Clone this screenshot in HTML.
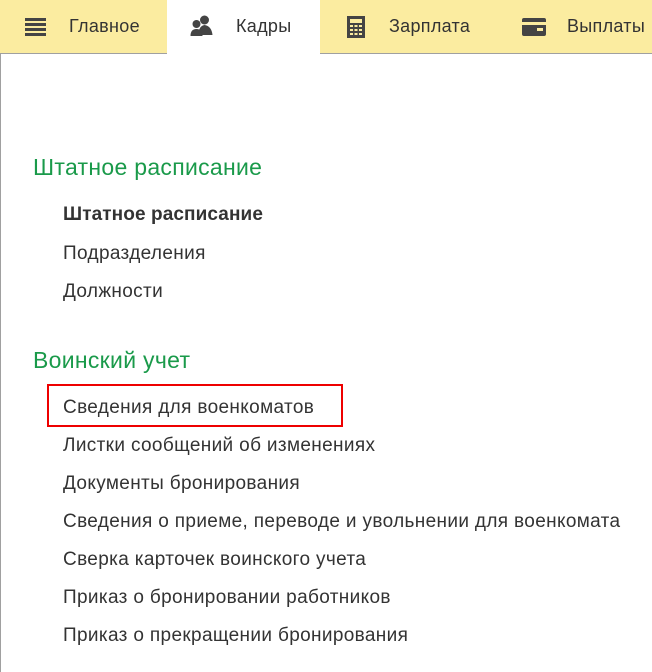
<!DOCTYPE html>
<html><head><meta charset="utf-8"><style>
body{margin:0;width:652px;height:672px;background:#fff;font-family:"Liberation Sans",Arial,sans-serif;overflow:hidden;position:relative}
.bar{position:absolute;left:0;top:0;width:652px;height:53px;background:#fbeca0;border-bottom:1px solid #a0a0a0}
.tab{position:absolute;top:0;height:53px;font-size:18px;letter-spacing:0.3px;color:#333;line-height:53px;white-space:nowrap}
.sel{background:#fff;height:54px}
.lb{position:absolute;left:0;top:53px;width:1px;height:619px;background:#a0a0a0}
.h{position:absolute;left:33px;font-size:23px;letter-spacing:0.3px;color:#1a9a4a;white-space:nowrap}
.i{position:absolute;left:63px;font-size:19px;letter-spacing:0.35px;color:#333;white-space:nowrap}
.red{position:absolute;left:47px;top:384px;width:292px;height:39px;border:2px solid #e00}
</style></head><body>
<div class="bar"></div>
<div class="tab" style="left:25px;">
<svg width="21" height="20" style="position:absolute;left:0;top:17px" viewBox="0 0 21 20"><g fill="#444"><rect x="0" y="1" width="21" height="3"/><rect x="0" y="6" width="21" height="3"/><rect x="0" y="11" width="21" height="3"/><rect x="0" y="16" width="21" height="3"/></g></svg>
<span style="position:absolute;left:44px">Главное</span></div>
<div class="tab sel" style="left:167px;width:153px;">
<svg width="25" height="22" style="position:absolute;left:23px;top:15px" viewBox="0 0 24 22"><g fill="#444"><circle cx="14" cy="5" r="4.5"/><path d="M8 20 Q8 11 14 10 Q21 11 22 20Z"/><circle cx="6" cy="9" r="4"/><path d="M0 21 Q0 14 6 14 Q12 14 12 21Z"/></g></svg>
<span style="position:absolute;left:69px">Кадры</span></div>
<div class="tab" style="left:347px;">
<svg width="18" height="22" style="position:absolute;left:0;top:16px" viewBox="0 0 18 22"><rect x="0" y="0" width="18" height="22" fill="#444"/><rect x="3" y="3" width="12" height="4" fill="#fbeca0"/><g fill="#fbeca0"><rect x="3" y="9" width="3" height="2"/><rect x="7.5" y="9" width="3" height="2"/><rect x="12" y="9" width="3" height="2"/><rect x="3" y="13" width="3" height="2"/><rect x="7.5" y="13" width="3" height="2"/><rect x="12" y="13" width="3" height="2"/><rect x="3" y="17" width="3" height="2"/><rect x="7.5" y="17" width="3" height="2"/><rect x="12" y="17" width="3" height="2"/></g></svg>
<span style="position:absolute;left:42px">Зарплата</span></div>
<div class="tab" style="left:522px;">
<svg width="24" height="18" style="position:absolute;left:0;top:18px" viewBox="0 0 24 18"><rect x="0" y="0" width="24" height="18" rx="2" fill="#444"/><rect x="0" y="4" width="24" height="3" fill="#fbeca0"/><rect x="15" y="10" width="6" height="3" fill="#fbeca0"/></svg>
<span style="position:absolute;left:45px">Выплаты</span></div>
<div class="lb"></div>
<div class="h" style="top:154px">Штатное расписание</div>
<div class="i" style="top:204px;font-weight:bold;letter-spacing:0.1px">Штатное расписание</div>
<div class="i" style="top:243px">Подразделения</div>
<div class="i" style="top:281px">Должности</div>
<div class="h" style="top:347px">Воинский учет</div>
<div class="red"></div>
<div class="i" style="top:397px">Сведения для военкоматов</div>
<div class="i" style="top:435px">Листки сообщений об изменениях</div>
<div class="i" style="top:473px">Документы бронирования</div>
<div class="i" style="top:511px">Сведения о приеме, переводе и увольнении для военкомата</div>
<div class="i" style="top:549px">Сверка карточек воинского учета</div>
<div class="i" style="top:587px">Приказ о бронировании работников</div>
<div class="i" style="top:625px">Приказ о прекращении бронирования</div>
</body></html>
